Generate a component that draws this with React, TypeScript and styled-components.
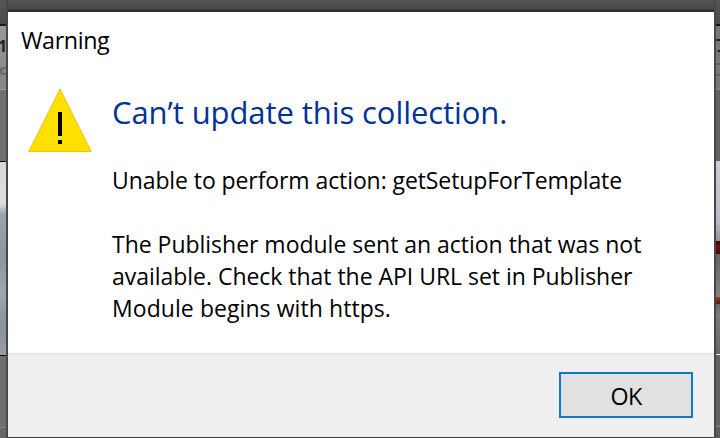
import React from "react";
import styled, { createGlobalStyle } from "styled-components";

const GlobalStyle = createGlobalStyle`
  * { box-sizing: border-box; }
  body { margin: 0; overflow: hidden; font-family: "Open Sans", "Noto Sans", sans-serif; color: #000; }
`;

const Screen = styled.main`
  width: 720px;
  height: 438px;
  display: grid;
  grid-template-columns: 8px 706px 6px;
  overflow: hidden;
  background: #4e4e4e;
`;

const Strip = styled.div<{ $side: "left" | "right" }>`
  display: flex;
  flex-direction: column;
  overflow: hidden;
  border-style: solid;
  border-color: #484848;
  border-width: ${({ $side }) => ($side === "left" ? "0 2px 0 0" : "0 0 0 2px")};
`;

const Band = styled.div<{ $h: number; $bg: string }>`
  flex: 0 0 ${({ $h }) => $h}px;
  background: ${({ $bg }) => $bg};
  overflow: hidden;
  display: flex;
  flex-direction: column;
  white-space: nowrap;
`;

const Day = styled.span`
  margin: 9px 0 0 -2px;
  font: 700 16px/22px "Open Sans", sans-serif;
  color: #222;
`;

const Caption = styled.span`
  margin: 1px 0 0 -1px;
  font: 700 15px/22px "Open Sans", sans-serif;
  color: #666;
`;

const Column = styled.div`
  display: flex;
  flex-direction: column;
`;

const TopEdge = styled.div`
  flex: 0 0 12px;
  background: linear-gradient(#575757, #484848 9px, #303030 10px, #303030);
`;

const Dialog = styled.section`
  height: 425px;
  display: flex;
  flex-direction: column;
  background: #fff;
`;

const TitleBar = styled.header`
  height: 76px;
  padding: 12px 0 0 13px;
  font-size: 23.3px;
  line-height: 32px;
  letter-spacing: -0.4px;
`;

const Content = styled.div`
  flex: 1;
  display: flex;
`;

const WarningIcon = styled.svg`
  width: 66px;
  height: 66px;
  margin-left: 19px;
  flex: none;
`;

const Message = styled.div`
  margin-left: 19px;
  white-space: nowrap;
`;

const Heading = styled.h1<{ $track: number }>`
  margin: 3px 0 0;
  font-size: 31px;
  line-height: 42px;
  font-weight: 400;
  letter-spacing: ${({ $track }) => $track}px;
  color: #003399;
`;

const Paragraph = styled.p<{ $gap: number }>`
  margin: ${({ $gap }) => $gap}px 0 0;
  font-size: 23px;
  line-height: 32px;
`;

const Line = styled.span<{ $track: number }>`
  display: block;
  width: max-content;
  letter-spacing: ${({ $track }) => $track}px;
`;

const Footer = styled.footer`
  height: 84px;
  border-top: 1px solid #dfdfdf;
  background: #efefef;
  display: flex;
  justify-content: flex-end;
  padding: 18px 21px 0 0;
`;

const Button = styled.button`
  width: 134px;
  height: 46px;
  padding: 1px 0 0;
  border: 2px solid #1078c8;
  border-radius: 0;
  background: #e1e1e1;
  color: #000;
  font: 400 23.3px/32px "Open Sans", sans-serif;
  letter-spacing: -0.6px;
`;

const BottomEdge = styled.div`
  flex: 1;
  background: #3c3c3c;
`;

export default function App() {
  return (
    <>
      <GlobalStyle />
      <Screen>
        <Strip $side="left">
          <Band $h={24} $bg="linear-gradient(#575757, #4a4a4a)" />
          <Band $h={2} $bg="#1c1c1c" />
          <Band $h={63} $bg="linear-gradient(#999, #858585)">
            <Day>12</Day>
            <Caption>c</Caption>
          </Band>
          <Band $h={1} $bg="#a0a0a0" />
          <Band $h={71} $bg="#707070" />
          <Band $h={1} $bg="#050505" />
          <Band $h={193} $bg="linear-gradient(#d8d8d8, #dedede 42px, #9ca5ac 52px, #8e969d 95px, #9ea6ad 130px, #8b939a 165px, #999fa4)" />
          <Band $h={1} $bg="#050505" />
          <Band $h={71} $bg="#6e6e6e" />
          <Band $h={1} $bg="#888" />
          <Band $h={10} $bg="#676767" />
        </Strip>
        <Column>
          <TopEdge />
          <Dialog>
            <TitleBar>Warning</TitleBar>
            <Content>
              <WarningIcon viewBox="0 0 66 66">
                <path d="M33 1 64.3 63.6H1.7Z" fill="#ffe000" stroke="#f2bd20" strokeWidth="1" />
                <path d="M31 24h4v24h-4ZM31 52h4v4h-4Z" fill="#000" />
              </WarningIcon>
              <Message>
                <Heading $track={-0.08}>Can’t update this collection.</Heading>
                <Paragraph $gap={31}>
                  <Line $track={-0.09}>Unable to perform action: getSetupForTemplate</Line>
                </Paragraph>
                <Paragraph $gap={32}>
                  <Line $track={-0.02}>The Publisher module sent an action that was not</Line>
                  <Line $track={-0.03}>available. Check that the API URL set in Publisher</Line>
                  <Line $track={0.07}>Module begins with https.</Line>
                </Paragraph>
              </Message>
            </Content>
            <Footer>
              <Button type="button">OK</Button>
            </Footer>
          </Dialog>
          <BottomEdge />
        </Column>
        <Strip $side="right">
          <Band $h={24} $bg="linear-gradient(#575757, #4a4a4a)" />
          <Band $h={2} $bg="#161616" />
          <Band $h={13} $bg="#777" />
          <Band $h={2} $bg="linear-gradient(90deg, #444 1px, #1c1c1c 1px)" />
          <Band $h={9} $bg="#777" />
          <Band $h={2} $bg="linear-gradient(90deg, #666 2px, #1c1c1c 2px)" />
          <Band $h={11} $bg="#777" />
          <Band $h={2} $bg="#5f5f5f" />
          <Band $h={9} $bg="#787878" />
          <Band $h={2} $bg="#5f5f5f" />
          <Band $h={13} $bg="#777" />
          <Band $h={1} $bg="#8b8b8b" />
          <Band $h={71} $bg="#626262" />
          <Band $h={80} $bg="linear-gradient(#c9cdd4, #b8bdc7 60px, #8f949d)" />
          <Band $h={13} $bg="linear-gradient(#370906, #790d08 6px, #351310)" />
          <Band $h={43} $bg="linear-gradient(#626262, #858585)" />
          <Band $h={7} $bg="linear-gradient(#8e4527, #6b100a)" />
          <Band $h={50} $bg="linear-gradient(#666, #7d7d7d 10px, #686868)" />
          <Band $h={1} $bg="#eee" />
          <Band $h={71} $bg="#626262" />
          <Band $h={1} $bg="#888" />
          <Band $h={11} $bg="#5c5c5c" />
        </Strip>
      </Screen>
    </>
  );
}
